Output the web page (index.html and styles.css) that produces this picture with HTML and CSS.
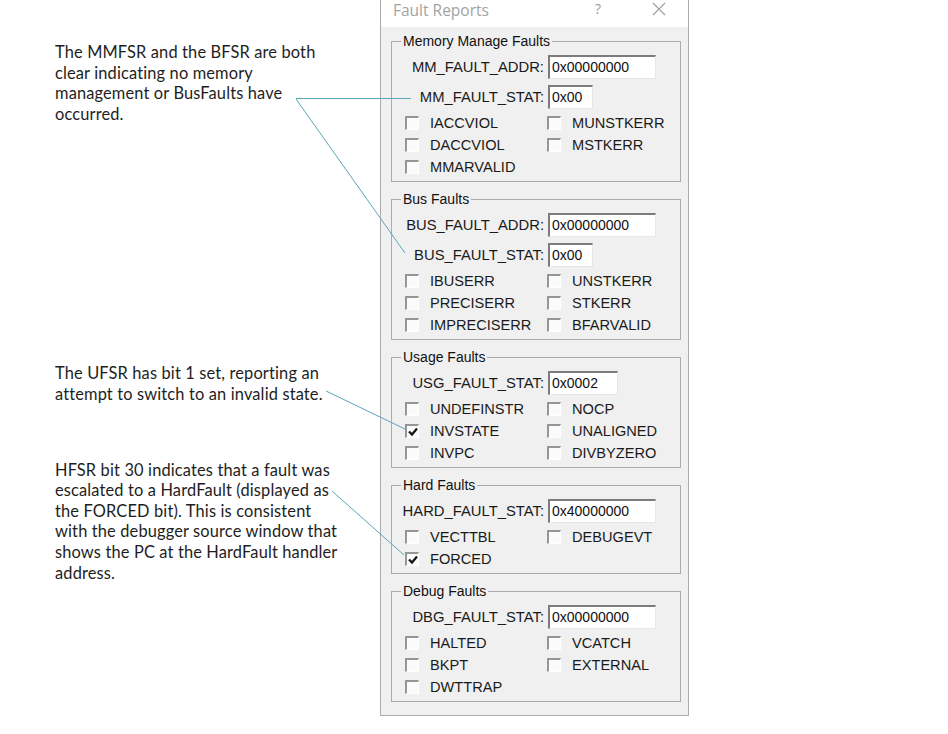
FILE: index.html
```html
<!DOCTYPE html>
<html lang="en">
<head>
<meta charset="utf-8">
<title>Fault Reports</title>
<link rel="stylesheet" href="styles.css">
</head>
<body>
<div class="page">
  <div class="notes">
    <p class="note note-mm">The MMFSR and the BFSR are both<br>clear indicating no memory<br>management or BusFaults have<br>occurred.</p>
    <p class="note note-uf">The UFSR has bit 1 set, reporting an<br>attempt to switch to an invalid state.</p>
    <p class="note note-hf">HFSR bit 30 indicates that a fault was<br>escalated to a HardFault (displayed as<br>the FORCED bit). This is consistent<br>with the debugger source window that<br>shows the PC at the HardFault handler<br>address.</p>
  </div>

  <div class="dialog">
    <div class="titlebar">
      <span class="title">Fault Reports</span>
      <span class="help">?</span>
      <svg class="close" width="14" height="14" viewBox="0 0 14 14"><path d="M1 1 L13 13 M13 1 L1 13" stroke="#a0a0a0" stroke-width="1.1" fill="none"/></svg>
    </div>
    <div class="body">
      <fieldset class="group">
        <legend>Memory Manage Faults</legend>
        <div class="field"><span class="label">MM_FAULT_ADDR:</span><span class="input w-long">0x00000000</span></div>
        <div class="field"><span class="label">MM_FAULT_STAT:</span><span class="input w-short">0x00</span></div>
        <div class="checks">
          <div class="check"><span class="box"></span><span>IACCVIOL</span></div>
          <div class="check"><span class="box"></span><span>MUNSTKERR</span></div>
          <div class="check"><span class="box"></span><span>DACCVIOL</span></div>
          <div class="check"><span class="box"></span><span>MSTKERR</span></div>
          <div class="check"><span class="box"></span><span>MMARVALID</span></div>
        </div>
      </fieldset>

      <fieldset class="group">
        <legend>Bus Faults</legend>
        <div class="field"><span class="label">BUS_FAULT_ADDR:</span><span class="input w-long">0x00000000</span></div>
        <div class="field"><span class="label">BUS_FAULT_STAT:</span><span class="input w-short">0x00</span></div>
        <div class="checks">
          <div class="check"><span class="box"></span><span>IBUSERR</span></div>
          <div class="check"><span class="box"></span><span>UNSTKERR</span></div>
          <div class="check"><span class="box"></span><span>PRECISERR</span></div>
          <div class="check"><span class="box"></span><span>STKERR</span></div>
          <div class="check"><span class="box"></span><span>IMPRECISERR</span></div>
          <div class="check"><span class="box"></span><span>BFARVALID</span></div>
        </div>
      </fieldset>

      <fieldset class="group">
        <legend>Usage Faults</legend>
        <div class="field"><span class="label">USG_FAULT_STAT:</span><span class="input w-mid">0x0002</span></div>
        <div class="checks">
          <div class="check"><span class="box"></span><span>UNDEFINSTR</span></div>
          <div class="check"><span class="box"></span><span>NOCP</span></div>
          <div class="check"><span class="box checked"><svg width="10" height="10" viewBox="0 0 10 10"><path d="M1 4.5 L4 7.5 L9 1.5" stroke="#111" stroke-width="2.2" fill="none"/></svg></span><span>INVSTATE</span></div>
          <div class="check"><span class="box"></span><span>UNALIGNED</span></div>
          <div class="check"><span class="box"></span><span>INVPC</span></div>
          <div class="check"><span class="box"></span><span>DIVBYZERO</span></div>
        </div>
      </fieldset>

      <fieldset class="group">
        <legend>Hard Faults</legend>
        <div class="field"><span class="label">HARD_FAULT_STAT:</span><span class="input w-long">0x40000000</span></div>
        <div class="checks">
          <div class="check"><span class="box"></span><span>VECTTBL</span></div>
          <div class="check"><span class="box"></span><span>DEBUGEVT</span></div>
          <div class="check"><span class="box checked"><svg width="10" height="10" viewBox="0 0 10 10"><path d="M1 4.5 L4 7.5 L9 1.5" stroke="#111" stroke-width="2.2" fill="none"/></svg></span><span>FORCED</span></div>
        </div>
      </fieldset>

      <fieldset class="group">
        <legend>Debug Faults</legend>
        <div class="field"><span class="label">DBG_FAULT_STAT:</span><span class="input w-long">0x00000000</span></div>
        <div class="checks">
          <div class="check"><span class="box"></span><span>HALTED</span></div>
          <div class="check"><span class="box"></span><span>VCATCH</span></div>
          <div class="check"><span class="box"></span><span>BKPT</span></div>
          <div class="check"><span class="box"></span><span>EXTERNAL</span></div>
          <div class="check"><span class="box"></span><span>DWTTRAP</span></div>
        </div>
      </fieldset>
    </div>
  </div>

  <svg class="leaders" width="948" height="734" viewBox="0 0 948 734">
    <g stroke="#5aa6b6" stroke-width="1" fill="none">
      <line x1="296" y1="98.5" x2="411" y2="98.5"/>
      <line x1="296" y1="99" x2="405" y2="253"/>
      <line x1="326" y1="391" x2="405" y2="429"/>
      <line x1="332" y1="491" x2="404" y2="555"/>
    </g>
  </svg>
</div>
</body>
</html>
```

FILE: styles.css
```css
* {
  box-sizing: border-box;
}

html, body {
  margin: 0;
  padding: 0;
  background: #ffffff;
}

.page {
  position: relative;
  width: 948px;
  height: 734px;
  display: flex;
  align-items: flex-start;
  overflow: hidden;
}

/* ---------- annotation text ---------- */
.notes {
  width: 325px;
  margin-left: 55px;
  padding-top: 42px;
  display: flex;
  flex-direction: column;
}

.note {
  margin: 0;
  font-family: Lato, "Open Sans", sans-serif;
  font-size: 16.4px;
  letter-spacing: 0.15px;
  line-height: 20.6px;
  color: #1e1e1e;
  white-space: nowrap;
}

.note-uf {
  margin-top: 239px;
}

.note-hf {
  margin-top: 55px;
}

/* ---------- dialog ---------- */
.dialog {
  width: 309px;
  background: #f0f0f0;
  border: 1px solid #ababab;
  border-top: none;
  font-family: "Liberation Sans", Arial, sans-serif;
  color: #1a1a1a;
}

.titlebar {
  height: 27px;
  background: #ffffff;
  display: flex;
  align-items: flex-start;
  padding-left: 12px;
}

.title {
  font-family: "Open Sans", "Noto Sans", sans-serif;
  font-size: 15.5px;
  line-height: 22px;
  margin-top: -1px;
  color: #a3a3a3;
}

.help {
  margin-left: auto;
  font-family: "Open Sans", sans-serif;
  font-size: 14px;
  line-height: 20px;
  color: #9a9a9a;
  margin-top: -1px;
}

.close {
  margin-left: 51px;
  margin-right: 22px;
  margin-top: 2px;
}

.body {
  padding: 6px 7px 13px 10px;
  display: flex;
  flex-direction: column;
  gap: 9px;
}

/* ---------- group boxes ---------- */
.group {
  margin: 0;
  padding: 6px 0 3px 0;
  min-width: 0;
  border: 1px solid #ababab;
}

.group legend {
  margin-left: 9px;
  padding: 0 2px;
  font-family: "Liberation Sans", Arial, sans-serif;
  font-size: 14px;
  line-height: 16px;
  color: #111;
}

.field {
  display: flex;
  align-items: center;
  height: 24px;
  margin-bottom: 6px;
}

.field + .checks {
  margin-top: -3px;
}

.label {
  width: 152px;
  text-align: right;
  font-size: 14.8px;
  white-space: nowrap;
}

.input {
  margin-left: 4px;
  height: 24px;
  background: #ffffff;
  border-top: 2px solid #7c7c7c;
  border-left: 2px solid #7c7c7c;
  border-right: 1px solid #e6e6e6;
  border-bottom: 1px solid #e6e6e6;
  padding-left: 2px;
  font-size: 14px;
  line-height: 20px;
  color: #111;
}

.w-long { width: 108px; }
.w-short { width: 45px; }
.w-mid { width: 70px; }

/* ---------- checkboxes ---------- */
.checks {
  display: grid;
  grid-template-columns: 142px 1fr;
  padding-left: 13px;
}

.check {
  display: flex;
  align-items: center;
  height: 22px;
  font-size: 14.6px;
  white-space: nowrap;
}

.box {
  width: 14px;
  height: 14px;
  flex: none;
  margin-right: 11px;
  background: #fbfbfb;
  border-top: 2px solid #969696;
  border-left: 2px solid #969696;
  border-right: 1px solid #ffffff;
  border-bottom: 1px solid #ffffff;
  display: flex;
  align-items: center;
  justify-content: center;
}

.box svg {
  display: block;
}

/* ---------- leader lines ---------- */
.leaders {
  position: absolute;
  left: 0;
  top: 0;
  pointer-events: none;
}
```
